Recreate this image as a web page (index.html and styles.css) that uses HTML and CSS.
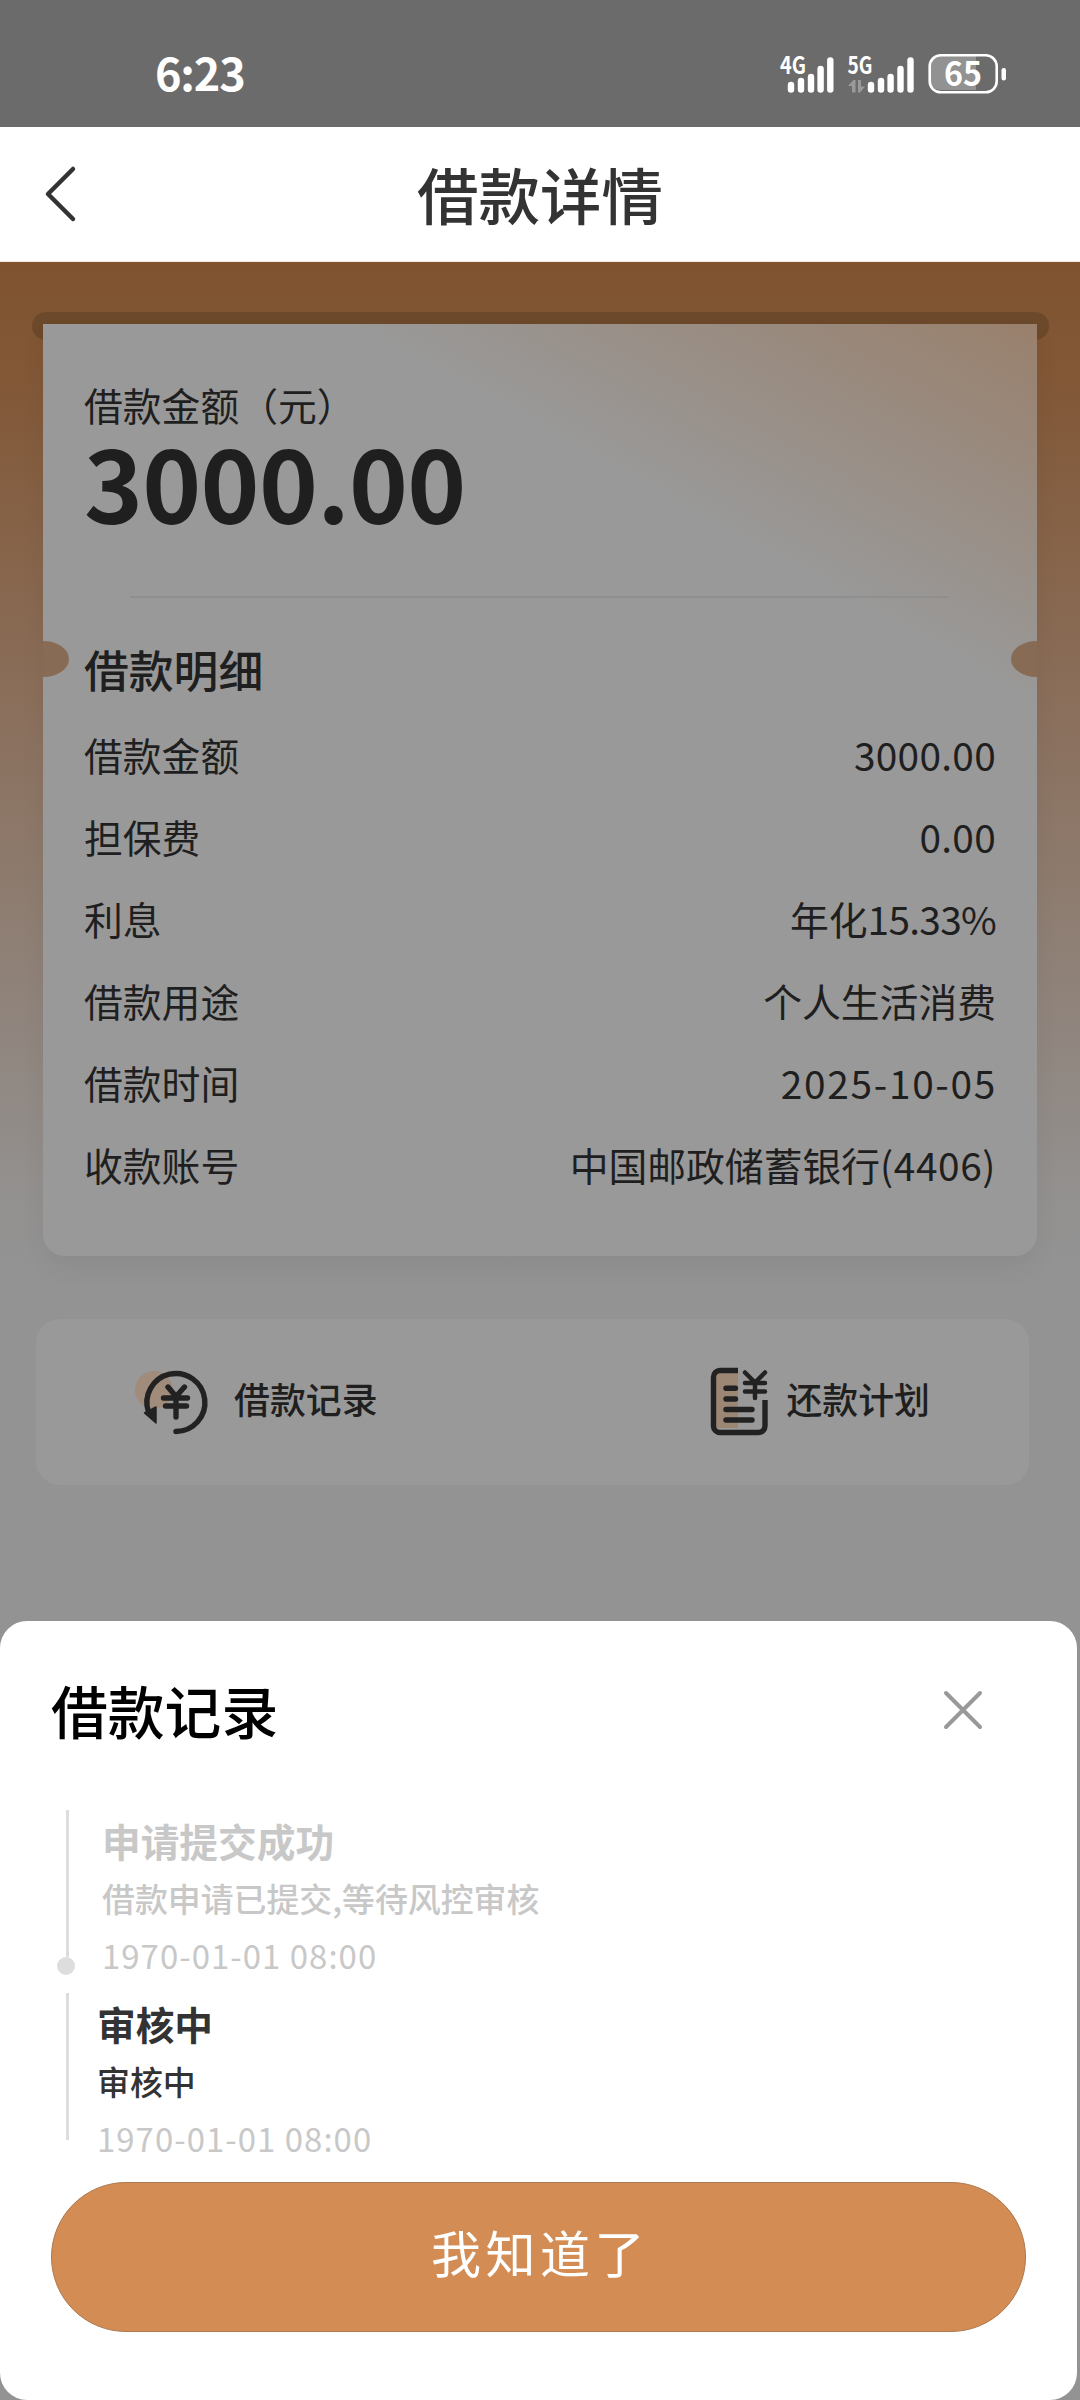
FILE: index.html
```html
<!DOCTYPE html>
<html lang="zh-CN">
<head>
<meta charset="utf-8">
<title>借款详情</title>
<link rel="stylesheet" href="styles.css">
</head>
<body>
<div class="screen">
  <header class="status">
    <span class="clock">6:23</span>
    <svg class="status-icons" width="232" height="60" viewBox="0 -8 232 60" fill="#fff">
      <text class="net" x="2" y="22" textLength="26" lengthAdjust="spacingAndGlyphs">4G</text>
      <g stroke="#fff" stroke-width="6.4" stroke-linecap="round">
        <path d="M13 33v4.500M23 29v8.500M33 25v12.500M42.600 17v20.500M52.300 8.500v29"/>
        <path d="M93 33v4.500M103 29v8.500M112.600 25v12.500M122.500 17v20.500M132.500 8.500v29"/>
      </g>
      <text class="net" x="69.500" y="22" textLength="25" lengthAdjust="spacingAndGlyphs">5G</text>
      <path d="M70 34l5.500-6h2v12.500h-3.500V34zM80 28h3v6.500h4l-5 6h-2z" fill="#9a9a9a"/>
      <path d="M162 4h36v34h-36a10 10 0 0 1-10-10V14a10 10 0 0 1 10-10z" fill="#929292"/>
      <rect x="151.700" y="3.300" width="67" height="37" rx="11" fill="none" stroke="#fff" stroke-width="2.600"/>
      <rect x="223.500" y="16" width="4.500" height="12.500" rx="2.200"/>
      <text class="level" x="166" y="34" textLength="38" lengthAdjust="spacingAndGlyphs">65</text>
    </svg>
  </header>

  <nav class="navbar">
    <svg class="back" width="34" height="60" viewBox="0 0 34 60"><path d="M30 5L5 30l25 25" fill="none" stroke="#333" stroke-width="4.500" stroke-linecap="round" stroke-linejoin="round"/></svg>
    <h1 class="nav-title">借款详情</h1>
  </nav>

  <main class="content">
    <div class="slot"></div>
    <section class="card">
      <i class="notch notch-left"></i><i class="notch notch-right"></i>
      <p class="label">借款金额（元）</p>
      <p class="amount">3000.00</p>
      <hr class="divider">
      <h2 class="section-title">借款明细</h2>
      <dl class="details">
        <div class="row"><dt>借款金额</dt><dd class="num">3000.00</dd></div>
        <div class="row"><dt>担保费</dt><dd class="num">0.00</dd></div>
        <div class="row"><dt>利息</dt><dd>年化<span class="rate">15.33%</span></dd></div>
        <div class="row"><dt>借款用途</dt><dd>个人生活消费</dd></div>
        <div class="row"><dt>借款时间</dt><dd class="date">2025-10-05</dd></div>
        <div class="row"><dt>收款账号</dt><dd>中国邮政储蓄银行<span class="account">(4406)</span></dd></div>
      </dl>
    </section>

    <section class="actions">
      <div class="action">
        <svg width="76" height="72" viewBox="0 0 76 72">
          <circle cx="20" cy="24" r="19" fill="#a18b7b"/>
          <g fill="none" stroke="#222" stroke-width="5.400" stroke-linecap="round" stroke-linejoin="round">
            <path d="M42 65.500A29 29 0 1 0 14.500 46"/>
            <path d="M34 21l8 9.500L50.500 21M29.500 32h24M31.500 40h21M42 31v20"/>
          </g>
          <path d="M10.500 47l11.500-6v16z" fill="#222" stroke="#222" stroke-width="1.500" stroke-linejoin="round"/>
        </svg>
        <span>借款记录</span>
      </div>
      <div class="action action-plan">
        <svg width="60" height="72" viewBox="0 0 60 72">
          <path d="M7 6h22v56H7z" fill="#9c8674"/>
          <g fill="none" stroke="#222" stroke-width="5.400" stroke-linejoin="round">
            <path d="M29 4.500H11A6.500 6.500 0 0 0 4.500 11v49A6.500 6.500 0 0 0 11 66.500h38.500A6.500 6.500 0 0 0 56 60V34"/>
            <path stroke-linecap="round" d="M17 22.300h9.500M17 33h9.500M17 43.500h26M17 54h26"/>
            <path stroke-width="4.500" stroke-linecap="round" d="M36 6.500L46 16.500 56 6.500M36 17h20M36 25.500h20M46 17v15"/>
          </g>
        </svg>
        <span>还款计划</span>
      </div>
    </section>
  </main>

  <section class="sheet">
    <div class="sheet-head">
      <h2 class="sheet-title">借款记录</h2>
      <svg class="close" width="44" height="44" viewBox="0 0 44 44"><path d="M5 5l34 34M39 5L5 39" stroke="#999" stroke-width="4" stroke-linecap="round"/></svg>
    </div>
    <ol class="timeline">
      <li class="event past">
        <div class="rail"><i class="line"></i><i class="dot"></i></div>
        <div class="event-text"><h3>申请提交成功</h3><p>借款申请已提交,等待风控审核</p><time>1970-01-01 08:00</time></div>
      </li>
      <li class="event">
        <div class="rail"><i class="line"></i></div>
        <div class="event-text"><h3>审核中</h3><p>审核中</p><time>1970-01-01 08:00</time></div>
      </li>
    </ol>
    <button class="confirm">我知道了</button>
  </section>
</div>
</body>
</html>
```
FILE: styles.css
```css
* { box-sizing: border-box; margin: 0; padding: 0; }
body { background: #939393; font-family: "Noto Sans CJK SC", sans-serif; color: #1f1f1f; }
i { font-style: normal; }
svg { display: block; flex: none; overflow: visible; }

.screen { width: 1080px; height: 2400px; display: flex; flex-direction: column; overflow: hidden; }

.status { height: 127px; padding: 0 70px 0 155px; background: #6b6b6b; color: #fff; display: flex; justify-content: space-between; }
.clock { font-size: 45px; font-weight: 700; line-height: 60px; margin-top: 42px; letter-spacing: -1.200px; }
.status-icons { margin-top: 44px; }
.net { font-size: 24px; font-weight: 700; }
.level { font-size: 33px; font-weight: 700; }

.navbar { height: 135px; padding: 0 43px; background: #fff; border-bottom: 1px solid #f5e8dc; display: flex; align-items: center; }
.nav-title { flex: 1; margin-right: 34px; text-align: center; font-size: 61.500px; font-weight: 500; line-height: 90px; color: #333; padding-bottom: 1px; }

.content { height: 1359px; flex: none; padding-top: 50px; background: linear-gradient(#7f532f 0, #825837 120px, #8a6e5a 430px, #939190 940px, #939393 1000px); }
.slot { width: 1017px; height: 28px; margin-left: 32px; border-radius: 14px; background: #6d492b; }
.card { position: relative; width: 994px; height: 932px; margin: -16px 0 0 43px; padding: 56px 41px 0; border-radius: 0 0 22px 22px; background: linear-gradient(209deg, #99806c 0, #999 335px); box-shadow: 0 12px 26px rgba(0, 0, 0, 0.05); }
.notch { position: absolute; top: 317px; width: 26px; height: 36px; background: #876b55; }
.notch-left { left: 0; border-radius: 0 26px 26px 0 / 0 18px 18px 0; }
.notch-right { right: 0; border-radius: 26px 0 0 26px / 18px 0 0 18px; }
.label { font-size: 38.800px; line-height: 48px; }
.amount { font-size: 100px; font-weight: 700; line-height: 100px; padding-top: 3px; letter-spacing: -0.700px; }
.divider { height: 2px; margin: 65px 47px 40px 46px; border: 0; background: #8f8f8f; }
.section-title { font-size: 44.800px; font-weight: 500; line-height: 60px; padding-top: 1px; margin-bottom: 14px; }
.row { height: 82px; display: flex; justify-content: space-between; align-items: center; font-size: 38.800px; line-height: 56px; }
.num { letter-spacing: 0.300px; }
.account { letter-spacing: 0.600px; }
.rate { letter-spacing: -0.700px; }
.date { letter-spacing: 1.700px; margin-right: -1px; }

.actions { width: 993px; height: 166px; margin: 63px 0 0 36px; padding: 0 99px 0 98px; border-radius: 24px; background: #999; display: flex; justify-content: space-between; align-items: center; font-size: 35.900px; font-weight: 500; line-height: 52px; }
.action { display: flex; align-items: center; gap: 24px; }
.action span { padding-bottom: 9px; }
.action-plan { gap: 17px; }

.sheet { width: 1077px; flex: 1; padding: 48px 51px 68px; border-radius: 27px; background: #fff; display: flex; flex-direction: column; }
.sheet-head { height: 80px; padding-right: 41px; display: flex; justify-content: space-between; align-items: center; }
.sheet-title { font-size: 56.800px; font-weight: 500; line-height: 80px; color: #000; }
.close { margin-top: 2px; }
.timeline { list-style: none; margin-top: 61px; }
.event { height: 183px; display: flex; color: #333; }
.rail { width: 46px; display: flex; flex-direction: column; }
.line { width: 3px; height: 147px; margin-left: 15px; background: #ddd; }
.dot { width: 18px; height: 18px; margin-left: 6px; border-radius: 50%; background: #ddd; }
.event-text { display: flex; flex-direction: column; padding-top: 2px; line-height: 57px; font-size: 32.900px; }
.event h3 { font-size: 38.700px; font-weight: 700; }
.event p { font-weight: 500; }
.event time { color: #c8c8c8; letter-spacing: 1.050px; }
.past { color: #c8c8c8; }
.past .rail { width: 51px; }
.confirm { height: 150px; width: 975px; margin-top: 6px; padding: 0 0 12px 3px; border: 1px solid #ad7950; border-radius: 75px; background: #d38c54; color: #fff; font-family: inherit; font-size: 50px; letter-spacing: 4.500px; }
```
